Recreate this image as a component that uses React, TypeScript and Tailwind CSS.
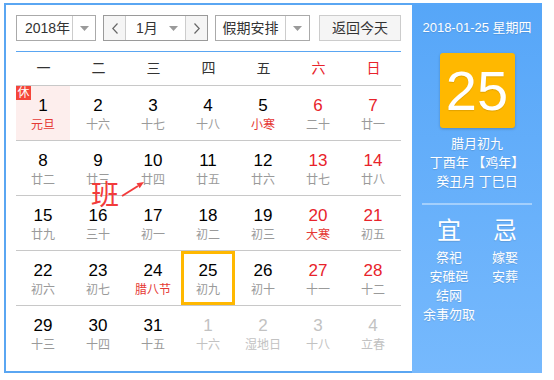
import React from "react";

// 万年历小部件：左侧月历 + 右侧当日详情
type Day = { n: number; lunar: string; red?: boolean; lunarRed?: boolean; other?: boolean; holiday?: boolean; today?: boolean };

const FONT = { fontFamily: '"Liberation Sans", "Noto Sans CJK SC", sans-serif' };

const WEEK = ["一", "二", "三", "四", "五", "六", "日"];

const DAYS: Day[] = [
  { n: 1, lunar: "元旦", lunarRed: true, holiday: true },
  { n: 2, lunar: "十六" },
  { n: 3, lunar: "十七" },
  { n: 4, lunar: "十八" },
  { n: 5, lunar: "小寒", lunarRed: true },
  { n: 6, lunar: "二十", red: true },
  { n: 7, lunar: "廿一", red: true },
  { n: 8, lunar: "廿二" },
  { n: 9, lunar: "廿三" },
  { n: 10, lunar: "廿四" },
  { n: 11, lunar: "廿五" },
  { n: 12, lunar: "廿六" },
  { n: 13, lunar: "廿七", red: true },
  { n: 14, lunar: "廿八", red: true },
  { n: 15, lunar: "廿九" },
  { n: 16, lunar: "三十" },
  { n: 17, lunar: "初一" },
  { n: 18, lunar: "初二" },
  { n: 19, lunar: "初三" },
  { n: 20, lunar: "大寒", red: true, lunarRed: true },
  { n: 21, lunar: "初五", red: true },
  { n: 22, lunar: "初六" },
  { n: 23, lunar: "初七" },
  { n: 24, lunar: "腊八节", lunarRed: true },
  { n: 25, lunar: "初九", today: true },
  { n: 26, lunar: "初十" },
  { n: 27, lunar: "十一", red: true },
  { n: 28, lunar: "十二", red: true },
  { n: 29, lunar: "十三" },
  { n: 30, lunar: "十四" },
  { n: 31, lunar: "十五" },
  { n: 1, lunar: "十六", other: true },
  { n: 2, lunar: "湿地日", other: true },
  { n: 3, lunar: "十八", other: true },
  { n: 4, lunar: "立春", other: true },
];

function Caret() {
  return (
    <svg width="9" height="5" viewBox="0 0 9 5">
      <path d="M0 0h9L4.5 5z" fill="#9a9a9a" />
    </svg>
  );
}

function Chevron({ dir }: { dir: "l" | "r" }) {
  return (
    <svg width="6" height="11" viewBox="0 0 6 11" fill="none" stroke="#666" strokeWidth="1.2">
      {dir === "l" ? <path d="M5.5 0.5 0.8 5.5l4.7 5" /> : <path d="M0.5 0.5l4.7 5-4.7 5" />}
    </svg>
  );
}

function Cell({ d }: { d: Day }) {
  const num = d.other ? "text-[#c2c2c2]" : d.red ? "text-[#e8232b]" : "text-black";
  const lunar = d.other ? "text-[#c2c2c2]" : d.lunarRed ? "text-[#e53935]" : "text-[#9a9a9a]";
  return (
    <div
      className={
        "relative flex h-[54px] w-[54px] flex-col items-center " +
        (d.today ? "border-[3px] border-[#ffb800] pt-[7px]" : "pt-[10px]") +
        (d.holiday ? " bg-[#fdeeed]" : "")
      }
    >
      {d.holiday && (
        <span className="absolute left-0 top-0 flex h-[14px] w-[15px] items-center justify-center bg-[#f5453a] text-[12px] leading-none text-white">
          休
        </span>
      )}
      <span className={"text-[17px] leading-[20px] " + num}>{d.n}</span>
      <span className={"whitespace-nowrap text-[12px] leading-[18px] " + lunar}>{d.lunar}</span>
    </div>
  );
}

export default function App() {
  const rows = [0, 1, 2, 3, 4].map((r) => DAYS.slice(r * 7, r * 7 + 7));

  return (
    <div className="min-h-[380px] bg-white pl-1 pt-[3px]" style={FONT}>
      <div className="flex h-[370px] w-[538px]">
        {/* 月历 */}
        <div className="relative w-[408px] border-y-2 border-l-2 border-[#5aa6f2] bg-white pl-[10px] pr-[11px] pt-[10px]">
          <div className="flex h-[26px] whitespace-nowrap text-[14px] text-[#333]">
            <div className="flex w-[80px] border border-[#aaa]">
              <span className="flex w-[56px] items-center justify-center border-r border-[#ccc] pl-[6px]">2018年</span>
              <span className="flex flex-1 items-center justify-center">
                <Caret />
              </span>
            </div>
            <div className="ml-[7px] flex w-[105px] border border-[#9a9a9a]">
              <span className="flex w-[22px] items-center justify-center border-r border-[#ccc] bg-[#f5f5f5]">
                <Chevron dir="l" />
              </span>
              <span className="flex w-[60px] items-center justify-between border-r border-[#ccc] pl-[10px] pr-[7px]">
                1月
                <Caret />
              </span>
              <span className="flex flex-1 items-center justify-center bg-[#f5f5f5]">
                <Chevron dir="r" />
              </span>
            </div>
            <div className="ml-[7px] flex w-[95px] border border-[#aaa]">
              <span className="flex w-[70px] items-center justify-center border-r border-[#ccc]">假期安排</span>
              <span className="flex flex-1 items-center justify-center">
                <Caret />
              </span>
            </div>
            <button className="ml-[9px] flex w-[82px] items-center justify-center border border-[#ccc] bg-[#f5f5f5]">
              返回今天
            </button>
          </div>

          <div className="mt-[10px] h-px bg-[#5aa6f2]" />

          <div className="grid h-[33px] grid-cols-7 items-center text-center text-[14px]">
            {WEEK.map((w, i) => (
              <span key={w} className={i >= 5 ? "text-[#e8232b]" : "text-[#333]"}>
                {w}
              </span>
            ))}
          </div>

          {rows.map((row, ri) => (
            <div key={ri} className="grid h-[55px] grid-cols-7 border-t border-[#c8c8c8]">
              {row.map((d, i) => (
                <Cell key={i} d={d} />
              ))}
            </div>
          ))}

          {/* 调休标注 */}
          <span className="absolute left-[85px] top-[177px] text-[28px] leading-none text-[#f23b3b]">班</span>
          <svg className="absolute left-[114px] top-[174px]" width="28" height="20" viewBox="0 0 28 20">
            <path d="M2 17 18 7" stroke="#f23b3b" strokeWidth="2" />
            <path d="M24 3 19.7 9.3 16.5 4.2z" fill="#f23b3b" />
          </svg>
        </div>

        {/* 当日详情 */}
        <div className="flex w-[130px] flex-col items-center bg-linear-to-b from-[#56a6f8] to-[#76b9fd] pt-[15px] text-white [text-shadow:0_1px_1px_rgba(0,0,0,0.12)]">
          <div className="text-[13px] leading-[20px]">2018-01-25 星期四</div>
          <div className="mt-[15px] flex h-[75px] w-[75px] items-center justify-center rounded-[3px] bg-[#ffb800] text-[56px] leading-none shadow-[0_1px_3px_rgba(0,0,0,0.2)]">
            25
          </div>
          <div className="mt-[6px] text-center text-[13px] leading-[19px]">
            <div>腊月初九</div>
            <div>丁酉年 【鸡年】</div>
            <div>癸丑月 丁巳日</div>
          </div>
          <div className="mt-[12px] h-[2px] w-[110px] bg-white/40" />
          <div className="mt-[12px] grid w-full grid-cols-2 px-[9px] text-center">
            <div className="flex flex-col items-center">
              <span className="text-[24px] leading-[28px]">宜</span>
              <div className="mt-[3px] text-[13px] leading-[19px]">
                <div>祭祀</div>
                <div>安碓硙</div>
                <div>结网</div>
                <div className="whitespace-nowrap">余事勿取</div>
              </div>
            </div>
            <div className="flex flex-col items-center">
              <span className="text-[24px] leading-[28px]">忌</span>
              <div className="mt-[3px] text-[13px] leading-[19px]">
                <div>嫁娶</div>
                <div>安葬</div>
              </div>
            </div>
          </div>
        </div>
      </div>
    </div>
  );
}
